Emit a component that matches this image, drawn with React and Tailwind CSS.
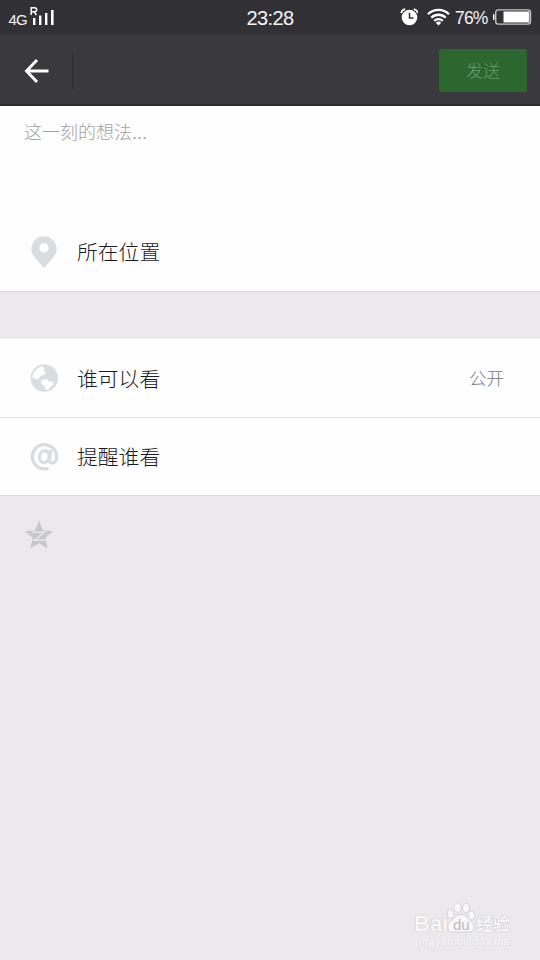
import React from 'react';

function StatusBar() {
  return (
    <div className="grid h-[35px] grid-cols-3 items-center bg-[#313135] font-['Liberation_Sans',sans-serif] text-[#f4f4f6]">
      <div className="flex h-full items-start pl-[8.5px]">
        <span className="mt-[10px] w-[21.5px] text-[15px] leading-5 tracking-[-0.8px]">4G</span>
        <svg className="mt-[6px]" width="26" height="20" viewBox="0 0 26 20" fill="none" aria-hidden="true">
          <path d="M1.200 9V1.700h3.400a2 2 0 0 1 0 4H1.200M4 5.700 6.500 9" stroke="white" strokeWidth="1.500" />
          <path d="M3 12h2.400v7H3zM9 9.500h2.400V19H9zM15 7h2.400v12H15zM21 4h2.600v15H21z" fill="white" />
        </svg>
      </div>
      <span className="text-center text-[20px] leading-6 tracking-[-0.65px]">23:28</span>
      <div className="flex h-full items-center justify-end pr-[8px]">
        <svg className="mr-[9px] mt-[-2px] shrink-0" width="18" height="18" viewBox="0 0 18 18" fill="none" aria-hidden="true">
          <circle cx="9.500" cy="9.500" r="7.800" fill="white" />
          <path d="M1.200 5.200A5 5 0 0 1 5.200 1.200M17.800 5.200A5 5 0 0 0 13.800 1.200" stroke="white" strokeWidth="1.800" />
          <path d="M9.500 4.800V10h4" stroke="#313135" strokeWidth="1.500" />
        </svg>
        <svg className="mr-[5px] mt-[-2px] shrink-0" width="23" height="18" viewBox="0 0 23 18" fill="none" aria-hidden="true">
          <path d="M1 6.200a15 15 0 0 1 21 0M4.300 9.700a10.300 10.300 0 0 1 14.400 0M7.300 12.900a6 6 0 0 1 8.400 0" stroke="white" strokeWidth="2.300" />
          <path d="m8.800 14.800 2.700 2.700 2.700-2.700a4 4 0 0 0-5.400 0Z" fill="white" />
        </svg>
        <span className="w-[38px] whitespace-nowrap pt-px text-[17.500px] leading-5 tracking-[-0.8px]">76%</span>
        <svg className="mt-[-2px] shrink-0" width="39" height="16" viewBox="0 0 39 16" fill="none" aria-hidden="true">
          <rect x="-.5" y="5" width="2" height="6" rx="1" fill="white" />
          <rect x="2.700" y=".9" width="34.800" height="14.200" rx="2.500" stroke="#c5c5c7" strokeWidth="1.400" />
          <path d="M10.500 2.500h25.800v11H10.500z" fill="white" />
        </svg>
      </div>
    </div>
  );
}

function Header() {
  return (
    <header className="flex h-[71px] items-center border-b-2 border-[#2c2c30] bg-[#3a393e] pr-[13px] pt-[2px]">
      <div className="flex h-9 w-[73px] items-center border-r border-[#2c2c30] pl-[24px]">
        <svg width="26" height="24" viewBox="0 0 26 24" fill="none" stroke="white" strokeWidth="2.900" aria-hidden="true">
          <path d="M13 1 2.500 12 13 23M2.500 12h22" />
        </svg>
      </div>
      <button className="ml-auto h-[43px] w-[88px] rounded-[3px] bg-[#2b672f] pt-[2px] text-[17px] font-light text-[#6c9c6e]">发送</button>
    </header>
  );
}

function PinIcon() {
  return (
    <svg width="30" height="34" viewBox="0 0 30 34" aria-hidden="true">
      <path fill="#d9dddf" fillRule="evenodd" d="M15 1.200A12.700 12.700 0 0 0 2.300 13.900C2.300 20.500 9 26 15 33 21 26 27.700 20.500 27.700 13.900A12.700 12.700 0 0 0 15 1.200ZM15 8a4.700 4.700 0 1 1 0 9.400A4.700 4.700 0 0 1 15 8Z" />
    </svg>
  );
}

function GlobeIcon() {
  return (
    <svg width="30" height="30" viewBox="0 0 30 30" aria-hidden="true">
      <circle cx="15.300" cy="15" r="13.700" fill="#d9dddf" />
      <path fill="#fefefe" d="M13.500 3.200 15.800 5.500 14.600 7.500 16.800 9.300 16 11.800 13 12.200 10.200 14 10.700 15.500 8 15.300 9.500 18 6 15.300 3.200 14.500C3.500 9.500 8 4.300 13.500 3.200ZM12 17.500 15.500 16.300 18.500 16.700 20.200 18.500 23.700 19 24.500 21.500 21.500 24 19.700 26.700 16.200 26.700 15.800 23.500 12.300 20.500Z" />
    </svg>
  );
}

function MentionIcon() {
  return (
    <svg width="30" height="30" viewBox="0 0 30 30" fill="none" stroke="#d9dddf" aria-hidden="true">
      <path strokeWidth="3.300" d="M19.500 26.300A12.200 12.200 0 1 1 27.700 14.800c0 3.800-2 6.200-4.600 6.200-2.100 0-2.900-1.300-2.600-3.600L21.700 8" />
      <ellipse cx="15.300" cy="14.700" rx="4.800" ry="6" strokeWidth="3.100" transform="rotate(14 15.300 14.700)" />
    </svg>
  );
}

function Row({ icon, label, value, className }) {
  return (
    <div className={`flex items-center bg-[#fefefe] pl-[29px] pr-[36px] ${className}`}>
      <span className="flex w-[48px] shrink-0">{icon}</span>
      <span className="pt-[3px] text-[20.8px] font-light leading-8 text-[#1b1a1e]">{label}</span>
      {value && <span className="ml-auto pt-[2px] text-[17.500px] font-light text-[#77767a]">{value}</span>}
    </div>
  );
}

function Watermark() {
  return (
    <div className="absolute left-[414px] top-[900px] h-[50px] w-[102px] text-[#f8f7f9] [text-shadow:0_0_1px_#bdbbbf,0_0_1px_#bdbbbf]">
      <span className="absolute left-0 top-[14px] text-[22px] font-bold leading-5">Bai</span>
      <svg className="absolute left-[32px] top-[2px]" width="30" height="31" viewBox="0 0 30 31" fill="#f8f7f9" stroke="#d2d0d4" strokeWidth=".9" aria-hidden="true">
        <ellipse cx="4.500" cy="12" rx="3.300" ry="4.300" />
        <ellipse cx="11.700" cy="5.500" rx="3.600" ry="4.800" />
        <ellipse cx="20" cy="5.800" rx="3.500" ry="4.700" transform="rotate(12 20 5.800)" />
        <ellipse cx="25.500" cy="13.500" rx="3.300" ry="4.300" />
        <path d="M15 12.500C20 12.500 21 16 25 19C30 23 29 30 23 30H7C1 30 0 23 5 19C9 16 10 12.500 15 12.500Z" />
      </svg>
      <span className="absolute left-[39px] top-[15px] text-[15px] leading-5 text-[#bbb9bd] [text-shadow:none]">du</span>
      <span className="absolute left-[62px] top-[15px] whitespace-nowrap text-[17px] font-bold leading-5">经验</span>
      <span className="absolute left-[1px] top-[35px] whitespace-nowrap font-['Liberation_Serif',serif] text-[12px] leading-[12px] tracking-[0.350px] text-[#f7f6f8] [text-shadow:1px_1px_0_#e0dee1]">jingyan.baidu.com</span>
    </div>
  );
}

export default function App() {
  return (
    <div className="relative h-[960px] w-[540px] overflow-hidden bg-[#ebe9ec] font-['Liberation_Sans','Noto_Sans_CJK_SC',sans-serif]">
      <StatusBar />
      <Header />
      <main>
        <section className="h-[186px] border-b border-[#dcdadd] bg-[#fefefe]">
          <div className="h-[106px] pl-[24px] pt-[15px] text-[18px] font-light leading-6 text-[#a3a1a5]">这一刻的想法...</div>
          <Row icon={<PinIcon />} label="所在位置" className="h-[79px]" />
        </section>
        <section className="mt-[47px]">
          <Row icon={<GlobeIcon />} label="谁可以看" value="公开" className="h-[79px] border-b border-[#e2e1e3]" />
          <Row icon={<MentionIcon />} label="提醒谁看" className="h-[78px] border-b border-[#dcdadd]" />
        </section>
        <div className="pl-[24px] pt-[24px]">
          <svg width="30" height="30" viewBox="0 0 30 30" aria-hidden="true">
            <path fill="#c8c7ca" d="m15 .8 4 9.700 10 .8-7.700 6.600L23.700 28.500 15 23.200 6.300 28.500 8.700 17.900 1 11.300l10-.8Z" />
            <path d="M8.500 12.300h11.800l-9.900 7.900H22" fill="none" stroke="#e9e7ea" strokeWidth="1.500" />
          </svg>
        </div>
      </main>
      <Watermark />
    </div>
  );
}
